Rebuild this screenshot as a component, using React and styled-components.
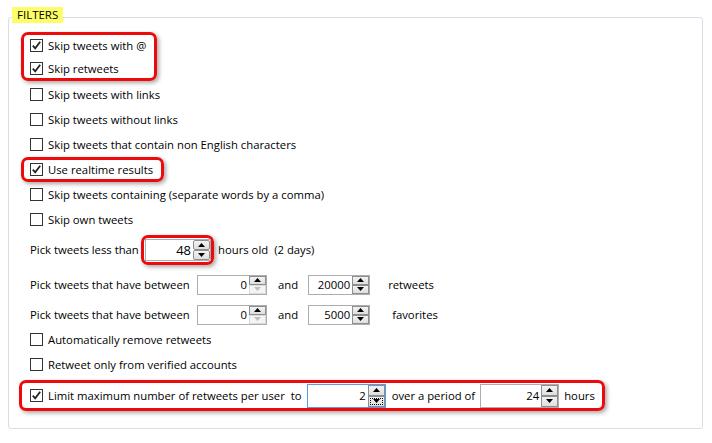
import React from "react";
import styled, { createGlobalStyle } from "styled-components";

const GlobalStyle = createGlobalStyle`
  html, body {
    margin: 0;
    padding: 0;
    background: #ffffff;
  }
  body {
    font-family: "Open Sans", "Noto Sans", sans-serif;
    font-size: 11.3px;
    color: #000;
  }
`;

const Page = styled.div`
  padding: 7px 9px 0 8px;
  width: 712px;
  height: 443px;
  box-sizing: border-box;
`;

const GroupBox = styled.fieldset`
  margin: 0;
  border: 1px solid #d5dfe5;
  border-radius: 3px;
  padding: 5px 0 17px 3px;
  min-width: 0;
`;

const Legend = styled.legend`
  padding: 0 0 4px 0;
  margin: 0;
`;

const LegendText = styled.span`
  display: block;
  background: #fdfd6a;
  line-height: 16px;
  padding: 0 5px;
  font-size: 11.5px;
`;

const Content = styled.div`
  padding-left: 18px;
  display: flex;
  flex-direction: column;
  align-items: flex-start;
`;

const Row = styled.div`
  display: flex;
  align-items: center;
  height: ${(p) => p.$h || 25}px;
  margin-top: ${(p) => p.$mt || 0}px;
  white-space: nowrap;
`;

const Highlight = styled.div`
  display: flex;
  flex-direction: ${(p) => (p.$column ? "column" : "row")};
  align-items: ${(p) => (p.$column ? "flex-start" : "center")};
  gap: ${(p) => p.$gap || 0}px;
  border: 3px solid #ee0a0a;
  border-radius: 7px;
  box-shadow: 2px 2px 4px rgba(0, 0, 0, 0.35);
  padding: ${(p) => p.$pad || "0"};
  margin: ${(p) => p.$margin || "0"};
  height: ${(p) => (p.$h ? `${p.$h}px` : "auto")};
  box-sizing: border-box;
  white-space: nowrap;
`;

const CheckLine = styled.label`
  display: flex;
  align-items: center;
  height: ${(p) => p.$h || 25}px;
  gap: 5px;
`;

const Box = styled.span`
  width: 13px;
  height: 13px;
  box-sizing: border-box;
  border: 1px solid #333;
  background: #fff;
  display: flex;
  align-items: center;
  justify-content: center;
  flex-shrink: 0;
`;

const Label = styled.span`
  width: ${(p) => (p.$w ? `${p.$w}px` : "auto")};
  margin-left: ${(p) => p.$ml || 0}px;
  margin-right: ${(p) => p.$mr || 0}px;
  flex-shrink: 0;
`;

const SpinBox = styled.div`
  display: flex;
  width: ${(p) => p.$w}px;
  height: ${(p) => p.$h}px;
  box-sizing: border-box;
  border: 1px solid ${(p) => (p.$focused ? "#569de5" : "#abadb3")};
  background: #fff;
  flex-shrink: 0;
`;

const SpinValue = styled.span`
  flex: 1;
  text-align: right;
  padding-right: 2px;
  font-size: ${(p) => (p.$big ? 13 : 11.3)}px;
  line-height: ${(p) => p.$h - 2}px;
`;

const SpinButtons = styled.div`
  width: 17px;
  display: flex;
  flex-direction: column;
`;

const SpinButton = styled.span`
  flex: 1;
  display: flex;
  align-items: center;
  justify-content: center;
  box-sizing: border-box;
  border: 1px solid ${(p) => (p.$disabled ? "#d9d9d9" : "#8e8e8e")};
  border-radius: ${(p) => (p.$round ? 2 : 0)}px;
  background: ${(p) =>
    p.$disabled ? "#f4f4f4" : "linear-gradient(#f3f3f3, #dedede)"};
  outline: ${(p) => (p.$focus ? "1px dotted #000" : "none")};
  outline-offset: -3px;
`;

const Check = () => (
  <svg width="11" height="11" viewBox="0 0 11 11">
    <path d="M1.8 5.6 L4.2 8.4 L9.2 1.8" fill="none" stroke="#222" strokeWidth="1.8" />
  </svg>
);

const Arrow = ({ up, color }) => (
  <svg width="7" height="4" viewBox="0 0 7 4">
    <polygon points={up ? "0,4 3.5,0 7,4" : "0,0 7,0 3.5,4"} fill={color} />
  </svg>
);

function CheckBox({ checked, children, h }) {
  return (
    <CheckLine $h={h}>
      <Box>{checked && <Check />}</Box>
      <span>{children}</span>
    </CheckLine>
  );
}

function Spinner({ value, w, h, big, focused, downDisabled, focusDown, round }) {
  return (
    <SpinBox $w={w} $h={h} $focused={focused}>
      <SpinValue $big={big} $h={h}>{value}</SpinValue>
      <SpinButtons>
        <SpinButton $round={round}>
          <Arrow up color="#000" />
        </SpinButton>
        <SpinButton $round={round} $disabled={downDisabled} $focus={focusDown}>
          <Arrow color={downDisabled ? "#bdbdbd" : "#000"} />
        </SpinButton>
      </SpinButtons>
    </SpinBox>
  );
}

export default function App() {
  return (
    <Page>
      <GlobalStyle />
      <GroupBox>
        <Legend>
          <LegendText>FILTERS</LegendText>
        </Legend>
        <Content>
          <Highlight $column $gap={4} $h={49} $pad="1px 8px 0 6px" $margin="0 0 1px -9px">
            <CheckBox checked h={20}>Skip tweets with @</CheckBox>
            <CheckBox checked h={20}>Skip retweets</CheckBox>
          </Highlight>
          <CheckBox>Skip tweets with links</CheckBox>
          <CheckBox>Skip tweets without links</CheckBox>
          <CheckBox>Skip tweets that contain non English characters</CheckBox>
          <Highlight $h={25} $pad="0 8px 0 6px" $margin="0 0 0 -9px">
            <CheckBox checked h={19}>Use realtime results</CheckBox>
          </Highlight>
          <CheckBox>Skip tweets containing (separate words by a comma)</CheckBox>
          <CheckBox>Skip own tweets</CheckBox>

          <Row $h={35}>
            <Label $w={111}>Pick tweets less than</Label>
            <Highlight $pad="1px 0 1px 1px">
              <Spinner value="48" w={66} h={22} big round />
            </Highlight>
            <Label $ml={4}>hours old</Label>
            <Label $ml={6}>(2 days)</Label>
          </Row>
          <Row $h={35}>
            <Label $w={167}>Pick tweets that have between</Label>
            <Spinner value="0" w={70} h={20} downDisabled />
            <Label $ml={11} $mr={10}>and</Label>
            <Spinner value="20000" w={62} h={20} />
            <Label $ml={18}>retweets</Label>
          </Row>
          <Row>
            <Label $w={167}>Pick tweets that have between</Label>
            <Spinner value="0" w={70} h={20} downDisabled />
            <Label $ml={11} $mr={10}>and</Label>
            <Spinner value="5000" w={62} h={20} />
            <Label $ml={22}>favorites</Label>
          </Row>
          <CheckBox>Automatically remove retweets</CheckBox>
          <CheckBox>Retweet only from verified accounts</CheckBox>

          <Highlight $h={31} $pad="0 7px 0 8px" $margin="3px 0 0 -11px" $gap={5}>
            <CheckBox checked h={25}>Limit maximum number of retweets per user</CheckBox>
            <Label $ml={1}>to</Label>
            <Spinner value="2" w={79} h={24} focused focusDown />
            <Label $ml={1}>over a period of</Label>
            <Spinner value="24" w={79} h={24} />
            <Label>hours</Label>
          </Highlight>
        </Content>
      </GroupBox>
    </Page>
  );
}
